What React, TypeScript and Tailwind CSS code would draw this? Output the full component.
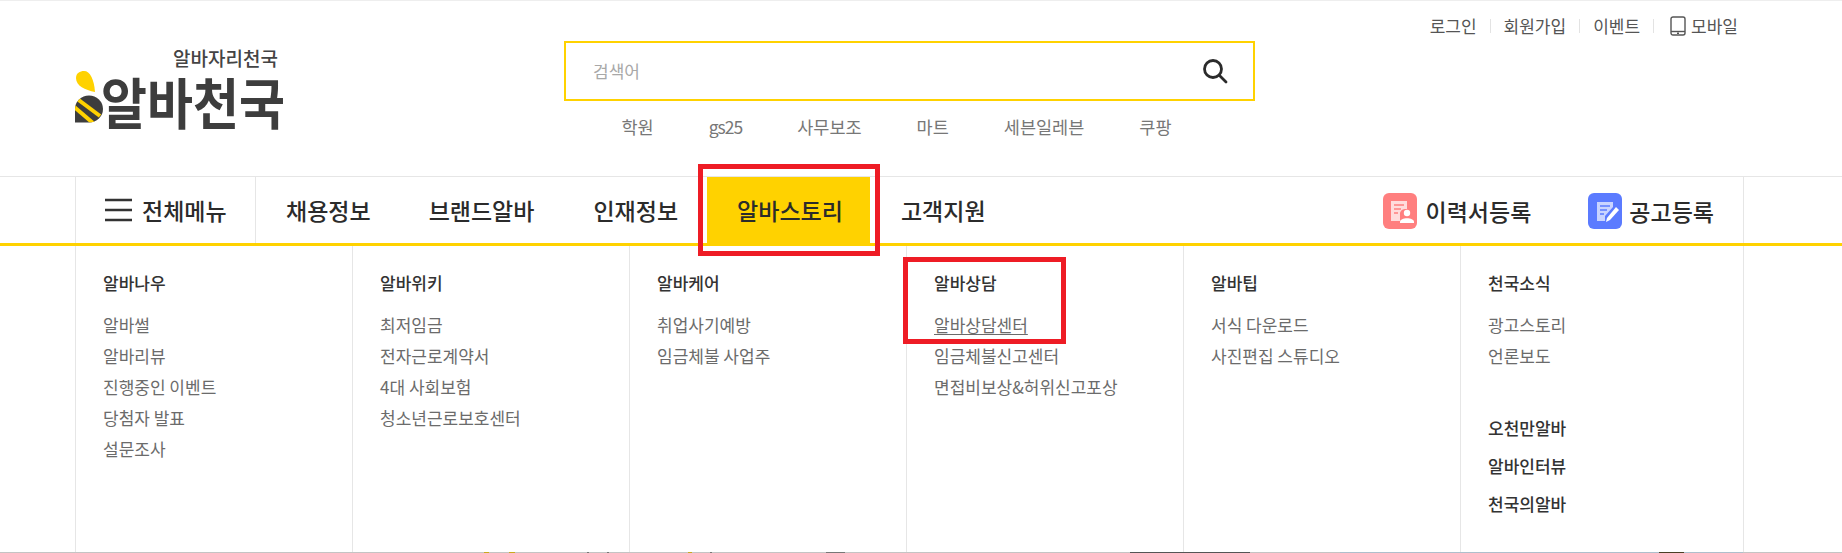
const columns = [
  { title: "알바나우", items: ["알바썰", "알바리뷰", "진행중인 이벤트", "당첨자 발표", "설문조사"] },
  { title: "알바위키", items: ["최저임금", "전자근로계약서", "4대 사회보험", "청소년근로보호센터"] },
  { title: "알바케어", items: ["취업사기예방", "임금체불 사업주"] },
  { title: "알바상담", items: ["알바상담센터", "임금체불신고센터", "면접비보상&허위신고포상"] },
  { title: "알바팁", items: ["서식 다운로드", "사진편집 스튜디오"] },
  { title: "천국소식", items: ["광고스토리", "언론보도"], extra: ["오천만알바", "알바인터뷰", "천국의알바"] },
];

function Bee() {
  return (
    <svg width="28" height="52" viewBox="0 0 28 52" className="mb-[6px] shrink-0 self-end">
      <defs>
        <clipPath id="bee-body">
          <path d="M0 38 A14 13.5 0 0 1 28 38 A14 13.5 0 0 1 14 51.5 L0 51.5 Z" />
        </clipPath>
      </defs>
      <path d="M1 7 C1 2 5 0 9 0 C15 0 19 8 20 21 C10 19 1 15 1 7 Z" fill="#ffd200" />
      <g clipPath="url(#bee-body)">
        <rect width="28" height="52" fill="#3d3d3d" />
        <path d="M1 27 L25 45" stroke="#ffd200" strokeWidth="4" />
        <path d="M-2 35 L18 52" stroke="#ffd200" strokeWidth="4" />
      </g>
    </svg>
  );
}

function Phone() {
  return (
    <svg width="16" height="20" viewBox="0 0 16 20" fill="none" stroke="#555" strokeWidth="1.4">
      <rect x="1" y="1" width="14" height="18" rx="2" />
      <path d="M1 15.5 H15" />
      <path d="M7 17.3 H9" />
    </svg>
  );
}

function ResumeIcon() {
  return (
    <svg width="34" height="36" viewBox="0 0 34 36">
      <rect width="34" height="36" rx="6" fill="#ff7f7f" />
      <path d="M8 8 H24 V16 H22 A5 5 0 0 0 17 22 V28 H8 Z" fill="#ffdcdc" />
      <path d="M11 12 H21 M11 16 H18 M11 20 H15" stroke="#ff7f7f" strokeWidth="1.6" />
      <circle cx="24" cy="20" r="3.2" fill="#fff" />
      <path d="M17 29 C17 24 31 24 31 29 V30 H17 Z" fill="#fff" />
    </svg>
  );
}

function NoticeIcon() {
  return (
    <svg width="34" height="36" viewBox="0 0 34 36">
      <rect width="34" height="36" rx="6" fill="#5b7bff" />
      <path d="M9 9 H25 V14 L17 23 V28 H9 Z" fill="#c9d4ff" />
      <path d="M12 13 H22 M12 17 H19 M12 21 H16" stroke="#5b7bff" strokeWidth="1.6" />
      <path d="M19 25 L28 14 L31 17 L22 27 L18 29 Z" fill="#fff" />
    </svg>
  );
}

const fragments = [
  "left-[484px] w-[5px] bg-[#c9a91e]",
  "left-[509px] w-[6px] bg-[#c9a91e]",
  "left-[587px] w-[2px] bg-[#777777]",
  "left-[607px] w-[2px] bg-[#777777]",
  "left-[688px] w-[4px] bg-[#c9a91e]",
  "left-[710px] w-[2px] bg-[#777777]",
  "left-[826px] w-[19px] bg-[#777777]",
  "left-[1130px] w-[120px] bg-[#555555]",
  "left-[1340px] w-[403px] bg-[#aebfcc]",
  "left-[1659px] w-[25px] bg-[#4a3f25]",
];

export default function App() {
  const sep = <span className="h-[14px] w-px bg-[#e3e3e3]" />;
  return (
    <div className="relative h-[553px] w-[1842px] overflow-hidden bg-white font-['Noto_Sans_CJK_KR',sans-serif] text-[#333]">
      <div className="h-px bg-[#eeeeee]" />
      <header className="flex h-[175px] items-start pl-[75px] pr-[104px]">
        <div className="flex h-[128px] w-[489px]">
          <Bee />
          <div className="-ml-[2px] mt-[45px]">
            <div className="w-[176px] whitespace-nowrap pl-[72px] text-[19px] font-medium leading-[24px] text-[#444]">
              알바자리천국
            </div>
            <div className="mt-[3px] scale-y-110 whitespace-nowrap text-[50px] font-bold leading-[55px] text-[#3d3d3d]">
              알바천국
            </div>
          </div>
        </div>

        <div className="mt-[40px] w-[691px]">
          <div className="flex h-[60px] items-center justify-between border-2 border-[#ffd200] pl-[27px] pr-[25px]">
            <span className="text-[17px] text-[#a8a8a8]">검색어</span>
            <svg width="26" height="26" viewBox="0 0 26 26" fill="none" stroke="#2b2b2b" strokeWidth="2.8">
              <circle cx="11" cy="11" r="8.5" />
              <path d="M17.5 17.5 L24 24" strokeLinecap="round" />
            </svg>
          </div>
          <div className="mt-[14px] flex justify-center gap-[55px] pr-[26px] text-[17.5px] leading-[24px] text-[#777]">
            <span>학원</span>
            <span className="tracking-[-1px]">gs25</span>
            <span>사무보조</span>
            <span>마트</span>
            <span>세븐일레븐</span>
            <span>쿠팡</span>
          </div>
        </div>

        <div className="ml-auto mt-[13px] flex items-center gap-[13px] text-[17px] leading-[24px] text-[#555]">
          <span>로그인</span>
          {sep}
          <span>회원가입</span>
          {sep}
          <span>이벤트</span>
          {sep}
          <span className="ml-[3px] flex items-center gap-[5px]">
            <Phone />
            모바일
          </span>
        </div>
      </header>

      <div className="border-t border-[#e6e6e6]">
        <nav className="ml-[75px] flex h-[66px] w-[1669px] items-stretch border-x border-[#e6e6e6] text-[23px] font-medium text-[#2b2b2b]">
          <div className="flex w-[180px] items-center gap-[10px] border-r border-[#e6e6e6] pl-[29px]">
            <svg width="27" height="24" viewBox="0 0 27 24" stroke="#333" strokeWidth="2.6">
              <path d="M0 2 H27 M0 12 H27 M0 22 H27" />
            </svg>
            <span>전체메뉴</span>
          </div>
          <div className="flex items-center pl-[30px] pr-[29px]">채용정보</div>
          <div className="flex items-center px-[29px]">브랜드알바</div>
          <div className="flex items-center pl-[30px] pr-[29px]">인재정보</div>
          <div className="flex items-center bg-[#ffd200] pl-[30px] pr-[27px]">알바스토리</div>
          <div className="flex items-center pl-[31px]">고객지원</div>
          <div className="ml-auto flex items-center gap-[9px] pr-[57px] pt-[2px]">
            <ResumeIcon />
            <span>이력서등록</span>
          </div>
          <div className="flex items-center gap-[7px] pr-[29px] pt-[2px]">
            <NoticeIcon />
            <span>공고등록</span>
          </div>
        </nav>
      </div>
      <div className="h-[3px] bg-[#ffd200]" />

      <div className="ml-[75px] grid h-[306px] w-[1669px] grid-cols-[repeat(5,277px)_1fr] border-r border-[#e6e6e6]">
        {columns.map((c) => (
          <div key={c.title} className="border-l border-[#e6e6e6] pl-[27px] pt-[25px]">
            <div className="text-[17px] font-medium leading-[24px] text-[#333]">{c.title}</div>
            <ul className="mt-[14px] text-[17px] leading-[31px] text-[#6b6b6b]">
              {c.items.map((i) => (
                <li key={i} className={i === "알바상담센터" ? "underline underline-offset-2" : ""}>
                  {i}
                </li>
              ))}
            </ul>
            {c.extra && (
              <ul className="mt-[38px] text-[17px] font-medium leading-[38px] text-[#333]">
                {c.extra.map((i) => (
                  <li key={i}>{i}</li>
                ))}
              </ul>
            )}
          </div>
        ))}
      </div>
      <div className="relative h-[1px] bg-[#c4c4c4]">
        {fragments.map((f) => (
          <span key={f} className={"absolute top-0 h-[1px] " + f} />
        ))}
      </div>

      <div className="absolute left-[698px] top-[164px] h-[92px] w-[182px] border-[5px] border-[#ee1c25]" />
      <div className="absolute left-[903px] top-[257px] h-[87px] w-[163px] border-[5px] border-[#ee1c25]" />
    </div>
  );
}
